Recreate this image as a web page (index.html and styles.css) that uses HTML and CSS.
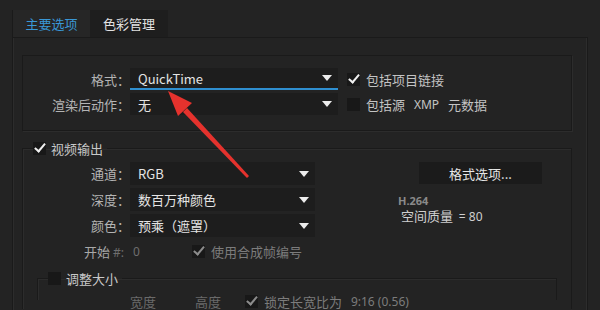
FILE: index.html
```html
<!DOCTYPE html>
<html lang="zh-CN">
<head>
    <meta charset="UTF-8">
    <meta name="viewport" content="width=device-width, initial-scale=1.0">
    <title>导出设置</title>
    <link rel="stylesheet" href="styles.css">
</head>

<body>
    <div class="window">
        <div class="tabs">
            <div class="tab tab-active">主要选项</div>
            <div class="tab">色彩管理</div>
        </div>

        <div class="panel">
            <!-- 格式 -->
            <div class="group">
                <div class="row">
                    <span class="label">格式：</span>
                    <div class="select select-focus">QuickTime</div>
                    <span class="opt"><span class="cb checked"></span>包括项目链接</span>
                </div>
                <div class="row">
                    <span class="label">渲染后动作：</span>
                    <div class="select">无</div>
                    <span class="opt"><span class="cb"></span>包括源 <span class="latin">XMP</span> 元数据</span>
                </div>
            </div>

            <!-- 视频输出 -->
            <fieldset class="box">
                <legend class="legend"><span class="cb checked"></span>视频输出</legend>
                <div class="video-body">
                    <div class="video-left">
                        <div class="row row-v">
                            <span class="label">通道：</span>
                            <div class="select select-short">RGB</div>
                        </div>
                        <div class="row row-v">
                            <span class="label">深度：</span>
                            <div class="select select-short">数百万种颜色</div>
                        </div>
                        <div class="row row-v">
                            <span class="label">颜色：</span>
                            <div class="select select-short">预乘（遮罩）</div>
                        </div>
                        <div class="row row-start">
                            <span class="label label-start">开始 <span class="dim">#:</span></span>
                            <span class="start-val">0</span>
                            <span class="opt opt-dim"><span class="cb checked"></span>使用合成帧编号</span>
                        </div>
                    </div>
                    <div class="video-right">
                        <div class="btn">格式选项...</div>
                        <div class="codec">H.264</div>
                        <div class="quality">空间质量  <span class="latin">= 80</span></div>
                    </div>
                </div>

                <!-- 调整大小 -->
                <fieldset class="box box-resize">
                    <legend class="legend"><span class="cb"></span>调整大小</legend>
                    <div class="resize-row">
                        <span class="size-label">宽度</span>
                        <span class="size-label size-h">高度</span>
                        <span class="opt opt-dim"><span class="cb checked"></span>锁定长宽比为 <span class="latin">9:16 (0.56)</span></span>
                    </div>
                </fieldset>
            </fieldset>
        </div>
    </div>

    <svg class="arrow" width="600" height="310" viewBox="0 0 600 310">
        <polygon fill="#e5322d" points="168,91 192,103 178,116"/>
        <polygon fill="#e5322d" points="187,108 249,176 247,178 183,112"/>
    </svg>
</body>
</html>
```

FILE: styles.css
```css
body {
    margin: 0;
    background-color: #232323;
    color: #bdbdbd;
    font-family: "Noto Sans CJK SC", "Noto Sans", sans-serif;
    font-size: 13px;
    height: 310px;
    overflow: hidden;
    position: relative;
}

.window {
    padding: 10px 12px 0;
}

.tabs {
    display: flex;
    height: 27px;
}

.tab {
    width: 78px;
    display: flex;
    align-items: center;
    justify-content: center;
    background-color: #1e1e1e;
    color: #e2e2e2;
}

.tab-active {
    background-color: #262626;
    color: #3a98d6;
    border-left: 1px solid #1a1a1a;
    box-sizing: border-box;
}

.panel {
    border: 1px solid #1a1a1a;
    border-bottom: none;
    box-shadow: inset 1px 0 0 #2c2c2c, -1px 0 0 #2c2c2c inset;
    padding: 17px 15px 0 9px;
    height: 255px;
}

.group {
    border: 1px solid #1a1a1a;
    box-shadow: 1px 1px 0 #2c2c2c;
    padding: 12px 0 15px;
    display: flex;
    flex-direction: column;
    gap: 3px;
}

.row {
    display: flex;
    align-items: center;
    height: 22px;
}

.label {
    width: 107px;
    text-align: right;
    color: #b4b4b4;
    white-space: nowrap;
}

.select {
    width: 208px;
    height: 100%;
    box-sizing: border-box;
    background-color: #1d1d1d;
    color: #e4e4e4;
    padding-left: 8px;
    display: flex;
    align-items: center;
    position: relative;
}

.select::after {
    content: "";
    position: absolute;
    right: 6px;
    top: 50%;
    margin-top: -3px;
    border-left: 5px solid transparent;
    border-right: 5px solid transparent;
    border-top: 6px solid #ececec;
}

.select-focus {
    border-bottom: 2px solid #2f8fd0;
}

.select-short {
    width: 185px;
}

.opt {
    display: flex;
    align-items: center;
    gap: 6px;
    margin-left: 9px;
    color: #c4c4c4;
    white-space: pre;
}

.latin {
    font-family: "Noto Sans", sans-serif;
    font-size: 12px;
}

.cb {
    width: 13px;
    height: 13px;
    background-color: #181818;
    position: relative;
    flex: none;
}

.cb.checked::after {
    content: "";
    position: absolute;
    left: 4px;
    top: -1px;
    width: 4px;
    height: 9px;
    border-right: 2px solid #f0f0f0;
    border-bottom: 2px solid #f0f0f0;
    transform: rotate(40deg);
}

.box {
    margin: 10px 0 0;
    padding: 7px 0 0;
    border: 1px solid #1a1a1a;
    border-bottom: none;
    box-shadow: inset 1px 1px 0 #2c2c2c;
    min-width: 0;
    height: 160px;
}

.legend {
    margin-left: 10px;
    padding: 0 4px 0 0;
    display: flex;
    align-items: center;
    gap: 5px;
    height: 14px;
    color: #c8c8c8;
}

.video-body {
    display: flex;
}

.video-left {
    display: flex;
    flex-direction: column;
    gap: 3px;
}

.row-v {
    height: 23px;
}

.row-start {
    height: 22px;
}

.label-start {
    box-sizing: border-box;
    padding-right: 6px;
    color: #a8a8a8;
}

.dim {
    color: #6e6e6e;
    font-family: "Noto Sans", sans-serif;
    font-size: 12px;
}

.start-val {
    width: 59px;
    padding-left: 3px;
    color: #6e6e6e;
    font-family: "Noto Sans", sans-serif;
    font-size: 12px;
}

.opt-dim {
    margin-left: 0;
    color: #7c7c7c;
}

.opt-dim .cb.checked::after {
    border-color: #8c8c8c;
}

.video-right {
    margin-left: 83px;
}

.btn {
    margin-left: 21px;
    width: 123px;
    height: 22px;
    background-color: #1b1b1b;
    color: #e6e6e6;
    display: flex;
    align-items: center;
    justify-content: center;
}

.codec {
    margin-top: 11px;
    font-family: "Noto Sans", sans-serif;
    font-size: 11px;
    font-weight: bold;
    color: #8a8a8a;
    line-height: 12px;
}

.quality {
    margin-left: 3px;
    margin-top: 2px;
    line-height: 14px;
    color: #cfcfcf;
    white-space: pre;
}

.box-resize {
    margin: 9px 14px 0;
    padding-top: 8px;
    height: 20px;
}

.resize-row {
    display: flex;
    align-items: center;
    height: 16px;
    padding-left: 92px;
}

.size-label {
    width: 65px;
    color: #6a6a6a;
}

.size-h {
    width: 50px;
}

.arrow {
    position: absolute;
    left: 0;
    top: 0;
    pointer-events: none;
}
```
